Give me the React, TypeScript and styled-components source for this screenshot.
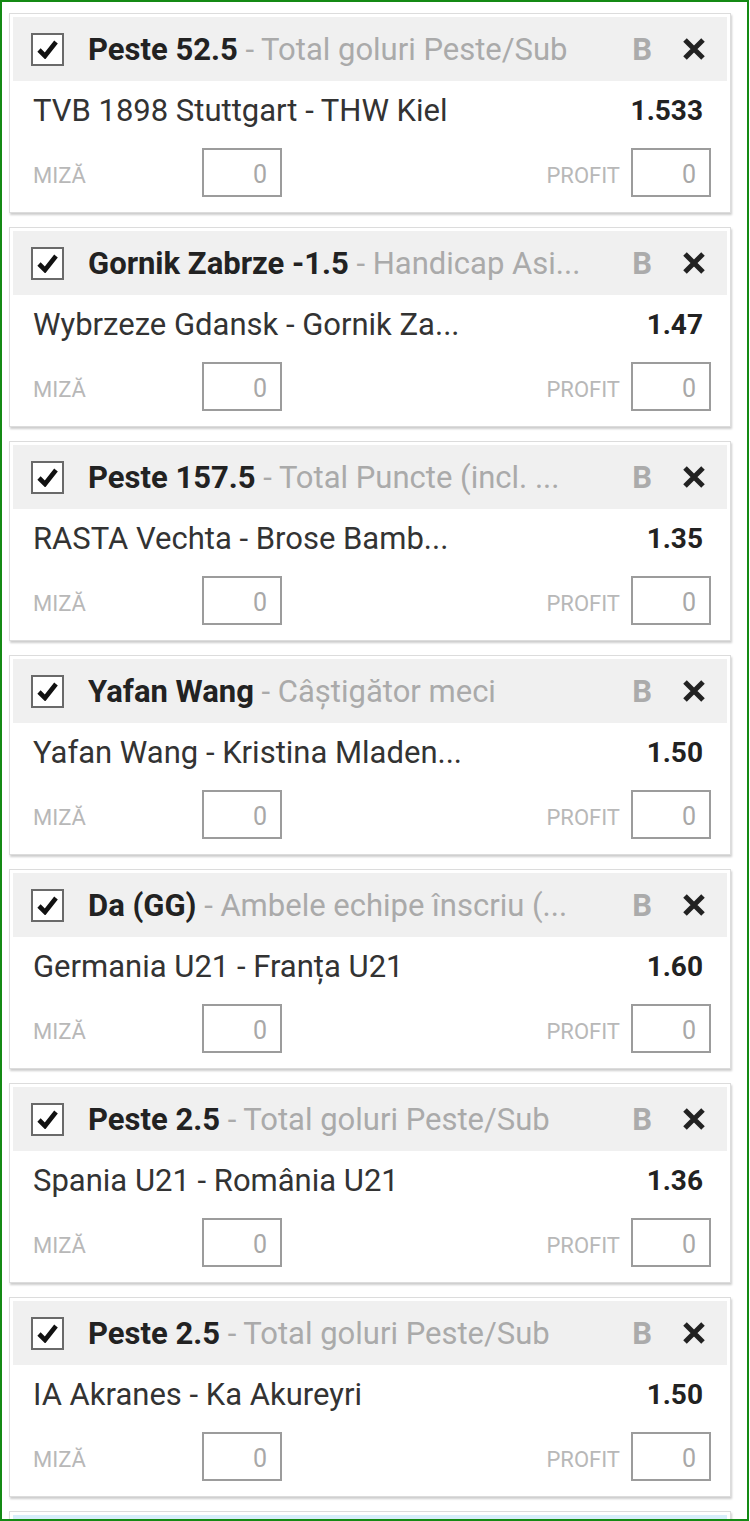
import { createGlobalStyle, styled } from "styled-components";

interface Bet {
  pick: string;
  market: string;
  match: string;
  odds: string;
}

const bets: Bet[] = [
  { pick: "Peste 52.5", market: "Total goluri Peste/Sub", match: "TVB 1898 Stuttgart - THW Kiel", odds: "1.533" },
  { pick: "Gornik Zabrze -1.5", market: "Handicap Asi...", match: "Wybrzeze Gdansk - Gornik Za...", odds: "1.47" },
  { pick: "Peste 157.5", market: "Total Puncte (incl. ...", match: "RASTA Vechta - Brose Bamb...", odds: "1.35" },
  { pick: "Yafan Wang", market: "Câștigător meci", match: "Yafan Wang - Kristina Mladen...", odds: "1.50" },
  { pick: "Da (GG)", market: "Ambele echipe înscriu (...", match: "Germania U21 - Franța U21", odds: "1.60" },
  { pick: "Peste 2.5", market: "Total goluri Peste/Sub", match: "Spania U21 - România U21", odds: "1.36" },
  { pick: "Peste 2.5", market: "Total goluri Peste/Sub", match: "IA Akranes - Ka Akureyri", odds: "1.50" },
];

const GlobalStyle = createGlobalStyle`
  * {
    box-sizing: border-box;
  }
  body {
    margin: 0;
    background: #fff;
    font-family: Roboto, "Liberation Sans", Arial, sans-serif;
  }
`;

const Frame = styled.div`
  width: 749px;
  height: 1521px;
  border: 2px solid #148a14;
  padding: 11px 0 0 7px;
  overflow: hidden;
  background: #fff;
`;

const Card = styled.div`
  width: 722px;
  height: 200px;
  margin-bottom: 14px;
  border: 1px solid #dcdcdc;
  padding: 3px;
  background: #fff;
  box-shadow: 1px 2px 2px rgba(0, 0, 0, 0.2);
  display: flex;
  flex-direction: column;
`;

const Header = styled.div<{ $active?: boolean }>`
  height: 64px;
  flex-shrink: 0;
  display: flex;
  align-items: center;
  padding: 0 21px 0 18px;
  background: ${(p) => (p.$active ? "#d6eefa" : "#f0f0f0")};
`;

const CheckBox = styled.div`
  width: 33px;
  height: 33px;
  border: 2px solid #6a6a6a;
  background: #fff;
  display: flex;
  align-items: center;
  justify-content: center;
  flex-shrink: 0;
`;

const Title = styled.div`
  flex: 1;
  min-width: 0;
  margin-left: 24px;
  white-space: nowrap;
  overflow: hidden;
  font-size: 31px;
  color: #aaa;
`;

const Pick = styled.span`
  font-weight: bold;
  color: #222;
`;

const BankerMark = styled.span`
  font-size: 31px;
  font-weight: bold;
  color: #ababab;
  margin-left: 14px;
`;

const CloseIcon = styled.svg`
  width: 24px;
  height: 24px;
  margin-left: 30px;
  flex-shrink: 0;
`;

const MatchRow = styled.div`
  height: 58px;
  flex-shrink: 0;
  display: flex;
  align-items: center;
  justify-content: space-between;
  padding: 0 24px 0 20px;
`;

const MatchName = styled.span`
  font-size: 31px;
  color: #333;
  white-space: nowrap;
`;

const Odds = styled.span`
  font-size: 28px;
  font-weight: bold;
  color: #222;
`;

const StakeRow = styled.div`
  display: flex;
  align-items: center;
  padding: 9px 16px 12px 20px;
`;

const Label = styled.span<{ $width?: number }>`
  font-size: 22px;
  color: #b8b8b8;
  margin-top: 5px;
  width: ${(p) => (p.$width ? `${p.$width}px` : "auto")};
  margin-right: ${(p) => (p.$width ? "0" : "11px")};
`;

const Spacer = styled.div`
  flex: 1;
`;

const AmountBox = styled.div`
  width: 80px;
  height: 49px;
  border: 2px solid #9c9c9c;
  background: #fff;
  display: flex;
  align-items: center;
  justify-content: flex-end;
  padding: 4px 13px 0 0;
  font-size: 25px;
  color: #a8a8a8;
`;

const BetCard = ({ bet }: { bet: Bet }) => (
  <Card>
    <Header>
      <CheckBox>
        <svg width="21" height="20" viewBox="0 0 21 20">
          <path d="M2 11 L8 17 L19 3" fill="none" stroke="#111" strokeWidth="4.6" />
        </svg>
      </CheckBox>
      <Title>
        <Pick>{bet.pick}</Pick> - {bet.market}
      </Title>
      <BankerMark>B</BankerMark>
      <CloseIcon viewBox="0 0 24 24">
        <path d="M3 3 L21 21 M21 3 L3 21" stroke="#222" strokeWidth="5" />
      </CloseIcon>
    </Header>
    <MatchRow>
      <MatchName>{bet.match}</MatchName>
      <Odds>{bet.odds}</Odds>
    </MatchRow>
    <StakeRow>
      <Label $width={169}>MIZĂ</Label>
      <AmountBox>0</AmountBox>
      <Spacer />
      <Label>PROFIT</Label>
      <AmountBox>0</AmountBox>
    </StakeRow>
  </Card>
);

const App = () => {
  return (
    <>
      <GlobalStyle />
      <Frame>
        {bets.map((bet, i) => (
          <BetCard key={i} bet={bet} />
        ))}
        {/* next selection, scrolled below the fold */}
        <Card>
          <Header $active />
        </Card>
      </Frame>
    </>
  );
};

export default App;
